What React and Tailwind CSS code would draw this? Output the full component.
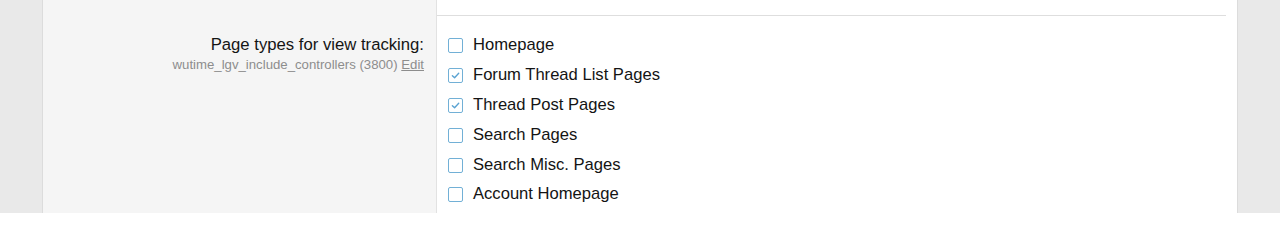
const options = [
  { label: 'Homepage', checked: false },
  { label: 'Forum Thread List Pages', checked: true },
  { label: 'Thread Post Pages', checked: true },
  { label: 'Search Pages', checked: false },
  { label: 'Search Misc. Pages', checked: false },
  { label: 'Account Homepage', checked: false },
];

function Box({ checked }) {
  return (
    <span className="flex h-[15px] w-[15px] shrink-0 items-center justify-center rounded-[2px] border-[1.5px] border-[#72b0d6] bg-white">
      {checked && (
        <svg viewBox="0 0 12 12" className="h-[11px] w-[11px]" fill="none" stroke="#5aa3d2" strokeWidth="1.5" strokeLinecap="round" strokeLinejoin="round">
          <path d="M2.6 6.2 L5 8.5 L9.5 3.5" />
        </svg>
      )}
    </span>
  );
}

export default function App() {
  return (
    <div className="flex h-[213px] w-full bg-[#e9e9e9] px-[42px] font-['Liberation_Sans',Arial,sans-serif]">
      <div className="flex flex-1 border-x border-[#dcdcdc]">
        <div className="w-[394px] shrink-0 border-r border-[#e2e2e2] bg-[#f5f5f5] pr-[12px] pt-[34px] text-right">
          <div className="text-[16.7px] leading-[22px] text-[#141414]">Page types for view tracking:</div>
          <div className="mt-[1px] text-[13.2px] leading-[16px] text-[#8d8d8d]">
            wutime_lgv_include_controllers (3800) <span className="underline">Edit</span>
          </div>
        </div>
        <div className="flex-1 bg-white pl-[11px] pr-[11px]">
          <div className="-ml-[11px] h-[16px] border-b border-[#dedede]" />
          <ul className="pt-[15px]">
            {options.map((o) => (
              <li key={o.label} className="flex h-[29.8px] items-center gap-[10px]">
                <Box checked={o.checked} />
                <span className="text-[16.6px] text-[#141414]">{o.label}</span>
              </li>
            ))}
          </ul>
        </div>
      </div>
    </div>
  );
}
